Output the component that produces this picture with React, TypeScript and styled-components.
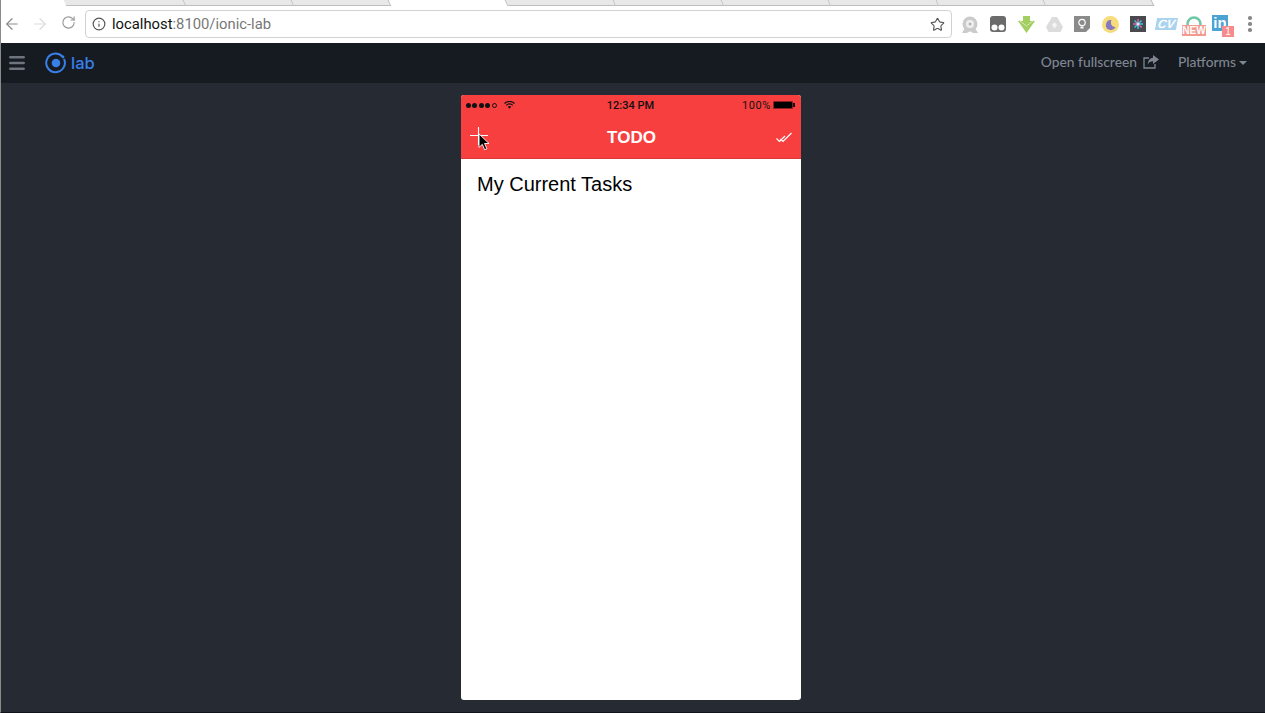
import React from "react";
import styled, { createGlobalStyle } from "styled-components";
import { ArrowLeft, ArrowRight, RotateCw, Info, Star, Menu } from "lucide-react";

const GlobalStyle = createGlobalStyle`
  html, body {
    margin: 0;
    padding: 0;
    height: 100%;
    background: #262b33;
    overflow: hidden;
  }
  * { box-sizing: border-box; }
`;

const tabWidths = [120, 108, 97, 117, 108, 108, 107, 108, 107, 108];

export default function App() {
  return (
    <Page>
      <GlobalStyle />
      <TabStrip>
        {tabWidths.map((w, i) => (
          <Tab key={i} $active={i === 3} style={{ width: w }} />
        ))}
      </TabStrip>
      <Toolbar>
        <NavGroup>
          <NavIcon $color="#8c8c8c"><ArrowLeft size={18} strokeWidth={1.6} /></NavIcon>
          <NavIcon $color="#dcdcdc"><ArrowRight size={18} strokeWidth={1.6} /></NavIcon>
          <NavIcon $color="#9a9a9a"><RotateCw size={15} strokeWidth={1.8} /></NavIcon>
        </NavGroup>
        <Omnibox>
          <Info size={14} color="#555" strokeWidth={2} />
          <Url>
            localhost<UrlRest>:8100/ionic-lab</UrlRest>
          </Url>
          <StarWrap><Star size={15} color="#555" strokeWidth={1.8} /></StarWrap>
        </Omnibox>
        <Extensions>
          <ExtSlot>
            <svg width="18" height="17" viewBox="0 0 18 17">
              <circle cx="9" cy="8" r="7.5" fill="#cbcbcb" />
              <circle cx="9" cy="8" r="4" fill="#efefef" />
              <circle cx="9" cy="8" r="1.5" fill="#b5b5b5" />
              <path d="M1 17l3-5h10l3 5h-5l-3-2-3 2z" fill="#cbcbcb" />
            </svg>
          </ExtSlot>
          <ExtSlot>
            <svg width="16" height="16" viewBox="0 0 16 16">
              <rect width="16" height="16" rx="3" fill="#6b6b6b" />
              <circle cx="4.5" cy="11.5" r="3" fill="#fff" />
              <circle cx="11.5" cy="11.5" r="3" fill="#fff" />
            </svg>
          </ExtSlot>
          <ExtSlot>
            <svg width="17" height="17" viewBox="0 0 17 17">
              <path d="M5 0h7v5h5l-8.5 12L0 5h5z" fill="#a3cf62" />
              <path d="M1.5 4.5L8.5 10l7-5.500" fill="none" stroke="#d3e9ae" strokeWidth="1" />
            </svg>
          </ExtSlot>
          <ExtSlot>
            <svg width="17" height="15" viewBox="0 0 17 15">
              <path d="M6 0h5l6 10-2.5 5h-12L0 10z" fill="#dcdcdc" />
              <path d="M8.5 5l3 4h-2v2h-2V9h-2z" fill="#f6f6f6" />
            </svg>
          </ExtSlot>
          <ExtSlot>
            <svg width="16" height="16" viewBox="0 0 16 16">
              <path d="M0 0h16v12l-4 4H0z" fill="#8a8a8a" />
              <circle cx="8" cy="6.5" r="3.2" fill="none" stroke="#fff" strokeWidth="1.2" />
              <path d="M6.5 10.5h3v2h-3z" fill="#fff" />
            </svg>
          </ExtSlot>
          <ExtSlot>
            <svg width="17" height="17" viewBox="0 0 17 17">
              <circle cx="8.5" cy="8.5" r="8.5" fill="#f6dc7a" />
              <path d="M9.5 4a5 5 0 1 0 4 7 4.5 4.5 0 0 1-4-7z" fill="#8478c0" />
            </svg>
          </ExtSlot>
          <ExtSlot>
            <svg width="16" height="16" viewBox="0 0 16 16">
              <rect width="16" height="16" fill="#4a4a4e" />
              <path d="M8 3v10M3 8h10M4.5 4.5l7 7M11.5 4.5l-7 7" stroke="#38c4e0" strokeWidth="1.5" />
              <path d="M8 3v5M3 8h5M11.500 11.500L8 8" stroke="#e0447c" strokeWidth="1.5" />
              <circle cx="8" cy="8" r="1.5" fill="#e8e8ee" />
            </svg>
          </ExtSlot>
          <ExtSlot>
            <CvBadge>CV</CvBadge>
          </ExtSlot>
          <ExtSlot>
            <svg width="16" height="16" viewBox="0 0 16 16">
              <circle cx="8" cy="8" r="6.5" fill="none" stroke="#6dc8a6" strokeWidth="2.5" />
            </svg>
            <NewBadge>NEW</NewBadge>
          </ExtSlot>
          <ExtSlot>
            <LinkedIn>in</LinkedIn>
            <CountBadge>1</CountBadge>
          </ExtSlot>
        </Extensions>
        <Kebab>
          <Dot />
          <Dot />
          <Dot />
        </Kebab>
      </Toolbar>
      <LabHeader>
        <HeaderLeft>
          <Menu size={20} color="#6e757f" strokeWidth={3} />
          <Logo>
            <svg width="22" height="22" viewBox="0 0 22 22">
              <path d="M17.3 4.5A9.3 9.3 0 1 0 19 7" fill="none" stroke="#3880e8" strokeWidth="2" />
              <circle cx="11" cy="11" r="4.3" fill="#3880e8" />
              <circle cx="18" cy="5" r="1.4" fill="#3880e8" />
            </svg>
            <LogoText>lab</LogoText>
          </Logo>
        </HeaderLeft>
        <HeaderRight>
          <HeaderLink>
            Open fullscreen
            <svg width="16" height="14" viewBox="0 0 16 14">
              <path d="M6 3H1v10h11V9" fill="none" stroke="currentColor" strokeWidth="1.3" />
              <path d="M10 0l6 4.5L10 9V6.3C7.5 6.3 5.8 7.2 4.8 9.5 4.8 5.5 7 3 10 2.8z" fill="currentColor" />
            </svg>
          </HeaderLink>
          <HeaderLink>
            Platforms
            <Caret />
          </HeaderLink>
        </HeaderRight>
      </LabHeader>
      <Stage>
        <Phone>
          <PhoneHeader>
            <StatusBar>
              <Signal>
                {[0, 1, 2, 3].map((i) => (
                  <SignalDot key={i} />
                ))}
                <SignalDot $empty />
                <svg width="11" height="8" viewBox="0 0 11 8" style={{ marginLeft: 6 }}>
                  <path d="M0.5 2.5a7 7 0 0 1 10 0M2.2 4.3a4.6 4.6 0 0 1 6.6 0" fill="none" stroke="#111" strokeWidth="1.1" />
                  <path d="M3.8 5.8a2.4 2.4 0 0 1 3.4 0L5.5 7.8z" fill="#111" />
                </svg>
              </Signal>
              <Clock>12:34 PM</Clock>
              <BatteryWrap>
                <BatteryText>100%</BatteryText>
                <Battery />
              </BatteryWrap>
            </StatusBar>
            <NavBar>
              <PlusWrap>
                <svg width="18" height="18" viewBox="0 0 18 18">
                  <path d="M8.5 0v18M0 8.5h18" stroke="#fff" strokeWidth="1.1" />
                </svg>
                <Cursor width="12" height="18" viewBox="0 0 13 20">
                  <path d="M1 1v15l3.6-3.4 2.6 6 2.5-1.1-2.6-5.800h5z" fill="#000" stroke="#fff" strokeWidth="1" />
                </Cursor>
              </PlusWrap>
              <Title>TODO</Title>
              <svg width="16" height="11" viewBox="0 0 16 11">
                <path d="M0.5 6.5l3 3 5.500-5.500" fill="none" stroke="#fff" strokeWidth="1.2" />
                <path d="M4.5 7l2.500 2.500L15.5 1" fill="none" stroke="#fff" strokeWidth="1.2" />
              </svg>
            </NavBar>
          </PhoneHeader>
          <Content>My Current Tasks</Content>
        </Phone>
      </Stage>
    </Page>
  );
}

const Page = styled.div`
  height: 713px;
  display: flex;
  flex-direction: column;
  border-left: 1px solid #8b8b8b;
  border-bottom: 1px solid #10141a;
  font-family: "Liberation Sans", Arial, sans-serif;
`;

const TabStrip = styled.div`
  height: 6px;
  background: #fff;
  display: flex;
  padding-left: 64px;
  flex: none;
`;

const Tab = styled.div<{ $active?: boolean }>`
  height: 6px;
  background: ${({ $active }) => ($active ? "#fff" : "#e8e8e8")};
  border-right: 1px solid #bdbdbd;
  border-bottom: ${({ $active }) => ($active ? "none" : "1px solid #bdbdbd")};
  transform: skewX(25deg);
  position: relative;
  z-index: ${({ $active }) => ($active ? 1 : 0)};
`;

const Toolbar = styled.div`
  height: 37px;
  background: #fff;
  display: flex;
  align-items: center;
  flex: none;
  padding: 0 0 1px 2px;
`;

const NavGroup = styled.div`
  display: flex;
  gap: 10px;
`;

const NavIcon = styled.div<{ $color: string }>`
  width: 18px;
  display: flex;
  justify-content: center;
  color: ${({ $color }) => $color};
`;

const Omnibox = styled.div`
  width: 867px;
  height: 28px;
  margin-left: 8px;
  border: 1px solid #d2d2d2;
  border-radius: 4px;
  display: flex;
  align-items: center;
  padding: 0 6px;
  gap: 6px;
  flex: none;
`;

const Url = styled.span`
  font-size: 14.8px;
  color: #111;
  font-family: "Roboto", "Liberation Sans", sans-serif;
`;

const UrlRest = styled.span`
  color: #777;
`;

const StarWrap = styled.div`
  margin-left: auto;
  display: flex;
`;

const Extensions = styled.div`
  display: flex;
  align-items: center;
  margin-left: 4px;
`;

const ExtSlot = styled.div`
  width: 28px;
  height: 28px;
  display: flex;
  align-items: center;
  justify-content: center;
  position: relative;
`;

const CvBadge = styled.span`
  font-size: 12px;
  font-weight: 700;
  font-style: italic;
  color: #fff;
  background: #a9d3ee;
  padding: 0 2px;
  line-height: 12px;
  transform: skewX(-10deg);
`;

const NewBadge = styled.span`
  position: absolute;
  left: 2px;
  top: 15px;
  width: 24px;
  height: 11px;
  background: #f29a90;
  color: #fff;
  font-size: 10px;
  font-weight: 700;
  line-height: 11px;
  text-align: center;
`;

const LinkedIn = styled.span`
  width: 16px;
  height: 16px;
  margin: -2px 4px 0 0;
  background: #4aa3d2;
  color: #fff;
  font-size: 15px;
  font-weight: 700;
  line-height: 16px;
  text-align: center;
`;

const CountBadge = styled.span`
  position: absolute;
  left: 14px;
  top: 16px;
  width: 12px;
  height: 11px;
  background: #f78a8a;
  color: #fff;
  font-size: 10px;
  line-height: 11px;
  text-align: center;
`;

const Kebab = styled.div`
  display: flex;
  flex-direction: column;
  gap: 2.5px;
  margin-left: 12px;
`;

const Dot = styled.span`
  width: 3.5px;
  height: 3.5px;
  border-radius: 50%;
  background: #888;
`;

const LabHeader = styled.header`
  height: 40px;
  background: #161a21;
  display: flex;
  align-items: center;
  justify-content: space-between;
  padding: 0 18px 0 6px;
  flex: none;
`;

const HeaderLeft = styled.div`
  display: flex;
  align-items: center;
  gap: 18px;
`;

const Logo = styled.div`
  display: flex;
  align-items: center;
  gap: 4px;
`;

const LogoText = styled.span`
  color: #3880e8;
  font-family: "Inter", "Liberation Sans", sans-serif;
  font-size: 16.5px;
  font-weight: 500;
`;

const HeaderRight = styled.div`
  display: flex;
  align-items: center;
  gap: 19px;
  padding-bottom: 3px;
`;

const HeaderLink = styled.div`
  display: flex;
  align-items: center;
  gap: 6px;
  color: #7f8690;
  font-family: "Lato", "Liberation Sans", sans-serif;
  font-size: 13.8px;
  font-weight: 500;
`;

const Caret = styled.span`
  width: 0;
  height: 0;
  margin-left: -3px;
  margin-top: 2px;
  border-left: 4.5px solid transparent;
  border-right: 4.5px solid transparent;
  border-top: 4.5px solid #7f8690;
`;

const Stage = styled.main`
  flex: 1;
  background: #262b33;
  display: flex;
  justify-content: center;
  padding: 12px 0;
`;

const Phone = styled.div`
  width: 340px;
  height: 605px;
  margin-right: 4px;
  background: #fff;
  border-radius: 3px;
  overflow: hidden;
  display: flex;
  flex-direction: column;
`;

const PhoneHeader = styled.div`
  height: 64px;
  background: #f73f3f;
  border-bottom: 1px solid #d93a3a;
  flex: none;
`;

const StatusBar = styled.div`
  height: 20px;
  display: grid;
  grid-template-columns: 1fr auto 1fr;
  align-items: center;
  padding: 0 6px 0 5px;
  font-size: 11px;
  color: #111;
  font-family: "Roboto", "Liberation Sans", sans-serif;
`;

const Signal = styled.div`
  display: flex;
  align-items: center;
  gap: 1.4px;
`;

const SignalDot = styled.span<{ $empty?: boolean }>`
  width: 5px;
  height: 5px;
  border-radius: 50%;
  background: ${({ $empty }) => ($empty ? "transparent" : "#111")};
  border: ${({ $empty }) => ($empty ? "0.5px solid #111" : "none")};
`;

const Clock = styled.span`
  font-weight: 500;
`;

const BatteryWrap = styled.div`
  display: flex;
  align-items: center;
  justify-content: flex-end;
  gap: 2px;
  padding-right: 2px;
`;

const BatteryText = styled.span`
  letter-spacing: 0.6px;
`;

const Battery = styled.span`
  width: 20px;
  height: 8px;
  background: #000;
  border: 1px solid #8c1f1f;
  border-radius: 1px;
  position: relative;
  &::after {
    content: "";
    position: absolute;
    right: -3px;
    top: 1px;
    width: 2px;
    height: 4px;
    background: #111;
  }
`;

const NavBar = styled.div`
  height: 43px;
  display: flex;
  align-items: center;
  justify-content: space-between;
  padding: 1px 9px 0;
`;

const PlusWrap = styled.div`
  position: relative;
  display: flex;
  width: 18px;
  height: 18px;
  margin-top: -2px;
`;

const Cursor = styled.svg`
  position: absolute;
  left: 8px;
  top: 6px;
`;

const Title = styled.h1`
  margin: 1px 0 0 -1px;
  color: #fff;
  font-size: 17px;
  font-weight: 700;
`;

const Content = styled.div`
  padding: 14px 16px;
  font-size: 20px;
  line-height: 22px;
  color: #000;
`;
